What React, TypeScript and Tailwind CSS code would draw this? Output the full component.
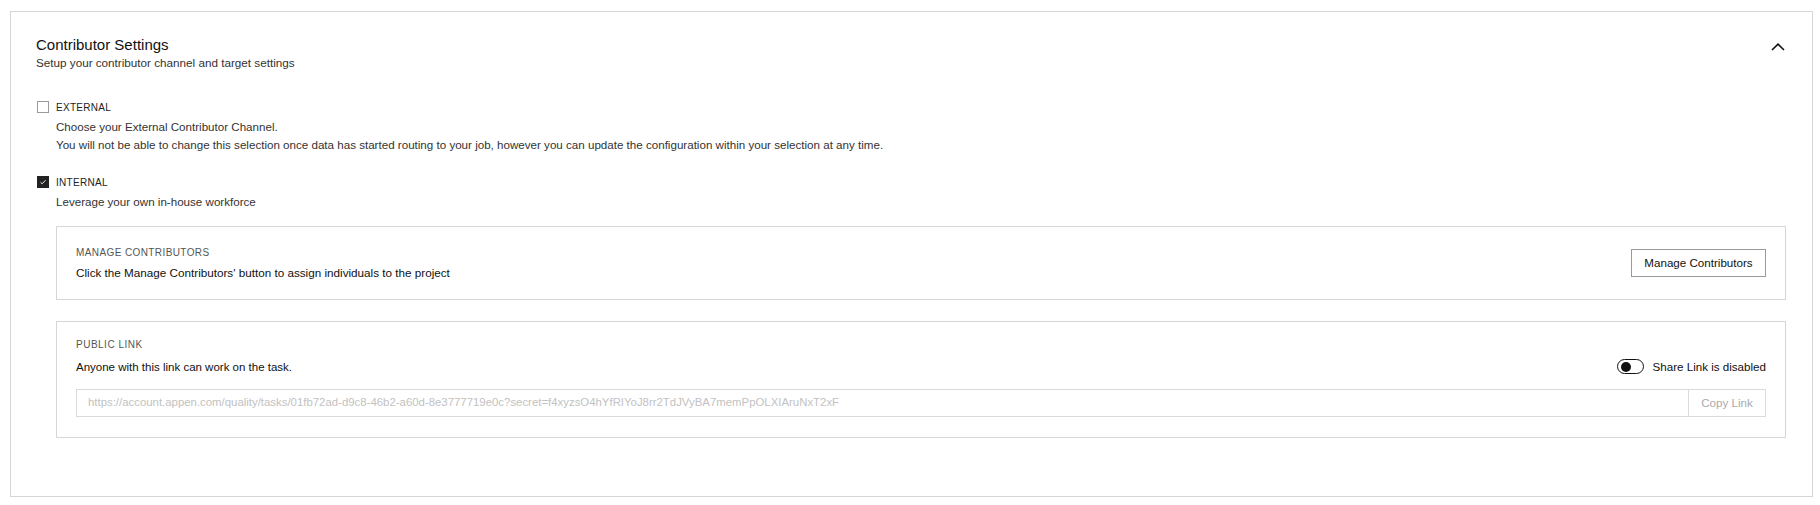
import React from "react";

const font = { fontFamily: '"Liberation Sans", Arial, sans-serif' };

function Checkbox({ checked }: { checked: boolean }) {
  return checked ? (
    <span className="flex h-[12px] w-[12px] items-center justify-center bg-[#222]">
      <svg width="8" height="8" viewBox="0 0 8 8">
        <polyline points="1.5,4.2 3.2,5.8 6.5,2.2" fill="none" stroke="#fff" strokeWidth="0.9" />
      </svg>
    </span>
  ) : (
    <span className="block h-[12px] w-[12px] border border-[#9a9a9a] bg-white" />
  );
}

export default function App() {
  return (
    <div className="h-[505px] w-[1820px] bg-white pl-[10px] pt-[11px] text-[#222]" style={font}>
      <div className="h-[486px] w-[1803px] border border-[#d6d6d6] pl-[25px] pr-[26px] pt-[24px]">
        <div className="flex items-start justify-between">
          <div>
            <div className="text-[15px] leading-[18px] text-[#111]">Contributor Settings</div>
            <div className="text-[11.7px] leading-[18px] text-[#333]">Setup your contributor channel and target settings</div>
          </div>
          <svg className="mr-[1px] mt-[7px]" width="14" height="8" viewBox="0 0 14 8">
            <polyline points="1,7 7,1.2 13,7" fill="none" stroke="#111" strokeWidth="1.6" />
          </svg>
        </div>

        <div className="mt-[26px] flex h-[18px] items-center gap-[7px] pl-[1px]">
          <Checkbox checked={false} />
          <span className="text-[10px] tracking-[0.3px] text-[#222]">EXTERNAL</span>
        </div>
        <div className="mt-[2px] pl-[20px] text-[11.6px] leading-[18px] text-[#333]">
          <div>Choose your External Contributor Channel.</div>
          <div>
            You will not be able to change this selection once data has started routing to your job, however you can
            update the configuration within your selection at any time.
          </div>
        </div>

        <div className="mt-[19px] flex h-[18px] items-center gap-[7px] pl-[1px]">
          <Checkbox checked={true} />
          <span className="text-[10px] tracking-[0.3px] text-[#222]">INTERNAL</span>
        </div>
        <div className="mt-[2px] pl-[20px] text-[11.6px] leading-[18px] text-[#333]">Leverage your own in-house workforce</div>

        <div className="ml-[20px] mt-[15px]">
          <div className="flex h-[74px] items-center justify-between border border-[#d6d6d6] px-[19px]">
            <div>
              <div className="text-[10px] leading-[16px] tracking-[0.4px] text-[#555]">MANAGE CONTRIBUTORS</div>
              <div className="mt-[3px] text-[11.7px] leading-[18px] text-[#111]">
                Click the Manage Contributors' button to assign individuals to the project
              </div>
            </div>
            <button className="h-[28px] w-[135px] border border-[#9a9a9a] bg-white text-[11.6px] text-[#111]">
              Manage Contributors
            </button>
          </div>

          <div className="mt-[21px] border border-[#d6d6d6] px-[19px] pb-[20px] pt-[15px]">
            <div className="text-[10px] leading-[16px] tracking-[0.5px] text-[#555]">PUBLIC LINK</div>
            <div className="mt-[5px] flex h-[18px] items-center justify-between">
              <div className="text-[11.5px] leading-[18px] text-[#111]">Anyone with this link can work on the task.</div>
              <div className="flex items-center gap-[9px]">
                <span className="flex h-[15px] w-[27px] items-center rounded-full border-[1.5px] border-[#111] pl-[3px]">
                  <span className="block h-[10px] w-[10px] rounded-full bg-[#111]" />
                </span>
                <span className="text-[11.6px] text-[#111]">Share Link is disabled</span>
              </div>
            </div>
            <div className="mt-[13px] flex h-[28px] border border-[#dadada]">
              <div className="flex flex-1 items-center truncate px-[11px] text-[11.4px] text-[#c2c2c2]">
                https://account.appen.com/quality/tasks/01fb72ad-d9c8-46b2-a60d-8e3777719e0c?secret=f4xyzsO4hYfRIYoJ8rr2TdJVyBA7memPpOLXIAruNxT2xF
              </div>
              <div className="flex w-[77px] items-center justify-center border-l border-[#dadada] text-[11.6px] text-[#aaa]">
                Copy Link
              </div>
            </div>
          </div>
        </div>
      </div>
    </div>
  );
}
